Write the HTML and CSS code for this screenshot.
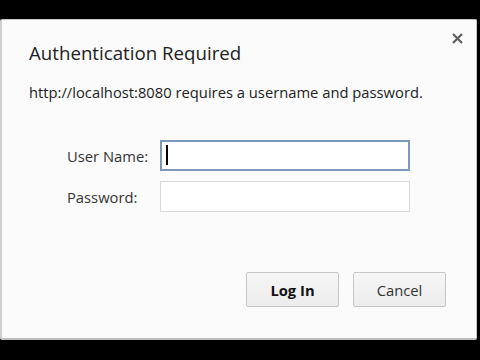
FILE: index.html
```html
<!DOCTYPE html>
<html lang="en">

<head>
  <meta charset="UTF-8">
  <title>Authentication Required</title>
  <link rel="stylesheet" href="styles.css">
</head>

<body>
  <div class="dialog">
    <!-- Header -->
    <div class="dialog-header">
      <h1>Authentication Required</h1>
      <button class="close-btn" aria-label="Close">
        <svg width="11" height="11" viewBox="0 0 11 11">
          <path d="M1 1 L10 10 M10 1 L1 10" stroke="#5f5f5f" stroke-width="2.2" fill="none" />
        </svg>
      </button>
    </div>

    <p class="message">http://localhost:8080 requires a username and password.</p>

    <!-- Credentials -->
    <form class="fields">
      <label for="username">User Name:</label>
      <div class="input focused" id="username"><span class="caret"></span></div>
      <label for="password">Password:</label>
      <div class="input" id="password"></div>
    </form>

    <!-- Actions -->
    <div class="actions">
      <button class="btn primary">Log In</button>
      <button class="btn">Cancel</button>
    </div>
  </div>
</body>

</html>
```

FILE: styles.css
```css
body {
  margin: 0;
  padding: 19px 3px 20px 0;
  background-color: #000;
  font-family: 'Open Sans', 'Noto Sans', sans-serif;
  color: #222;
}

/* Dialog box */
.dialog {
  height: 321px;
  box-sizing: border-box;
  background-color: #fbfbfb;
  border: 1px solid #c4c4c4;
  border-left: 2px solid #d0d0d0;
  border-bottom: 2px solid #bdbdbd;
  border-radius: 2px;
  padding: 0 0 0 27px;
}

.dialog-header {
  display: flex;
  justify-content: space-between;
  align-items: flex-start;
  padding-top: 18px;
}

h1 {
  margin: 0;
  font-size: 18.7px;
  font-weight: normal;
  line-height: 30px;
  color: #222;
}

.close-btn {
  background: none;
  border: none;
  padding: 0;
  margin: -5px 13px 0 0;
  width: 11px;
  height: 11px;
  cursor: pointer;
}

.close-btn svg {
  display: block;
}

.message {
  margin: 14px 0 0;
  font-size: 14.75px;
  line-height: 20px;
  color: #222;
}

.fields {
  display: grid;
  grid-template-columns: 93px 250px;
  row-gap: 10px;
  align-items: center;
  margin: 38px 0 0 38px;
}

label {
  font-size: 14.75px;
  color: #333;
}

.input {
  height: 31px;
  box-sizing: border-box;
  background-color: #fff;
  border: 1px solid #d9d9d9;
  position: relative;
}

.input.focused {
  border: 2px solid #7d98b8;
}

.caret {
  position: absolute;
  left: 4px;
  top: 3px;
  width: 2px;
  height: 20px;
  background-color: #000;
}

.actions {
  display: flex;
  justify-content: flex-end;
  gap: 14px;
  margin-top: 60px;
  padding-right: 30px;
}

.btn {
  width: 93px;
  height: 35px;
  font-family: inherit;
  font-size: 14.75px;
  color: #333;
  background: linear-gradient(#f6f6f6, #ececec);
  border: 1px solid #c6c6c6;
  border-radius: 2px;
  cursor: pointer;
}

.btn.primary {
  font-weight: bold;
  color: #111;
}
```
